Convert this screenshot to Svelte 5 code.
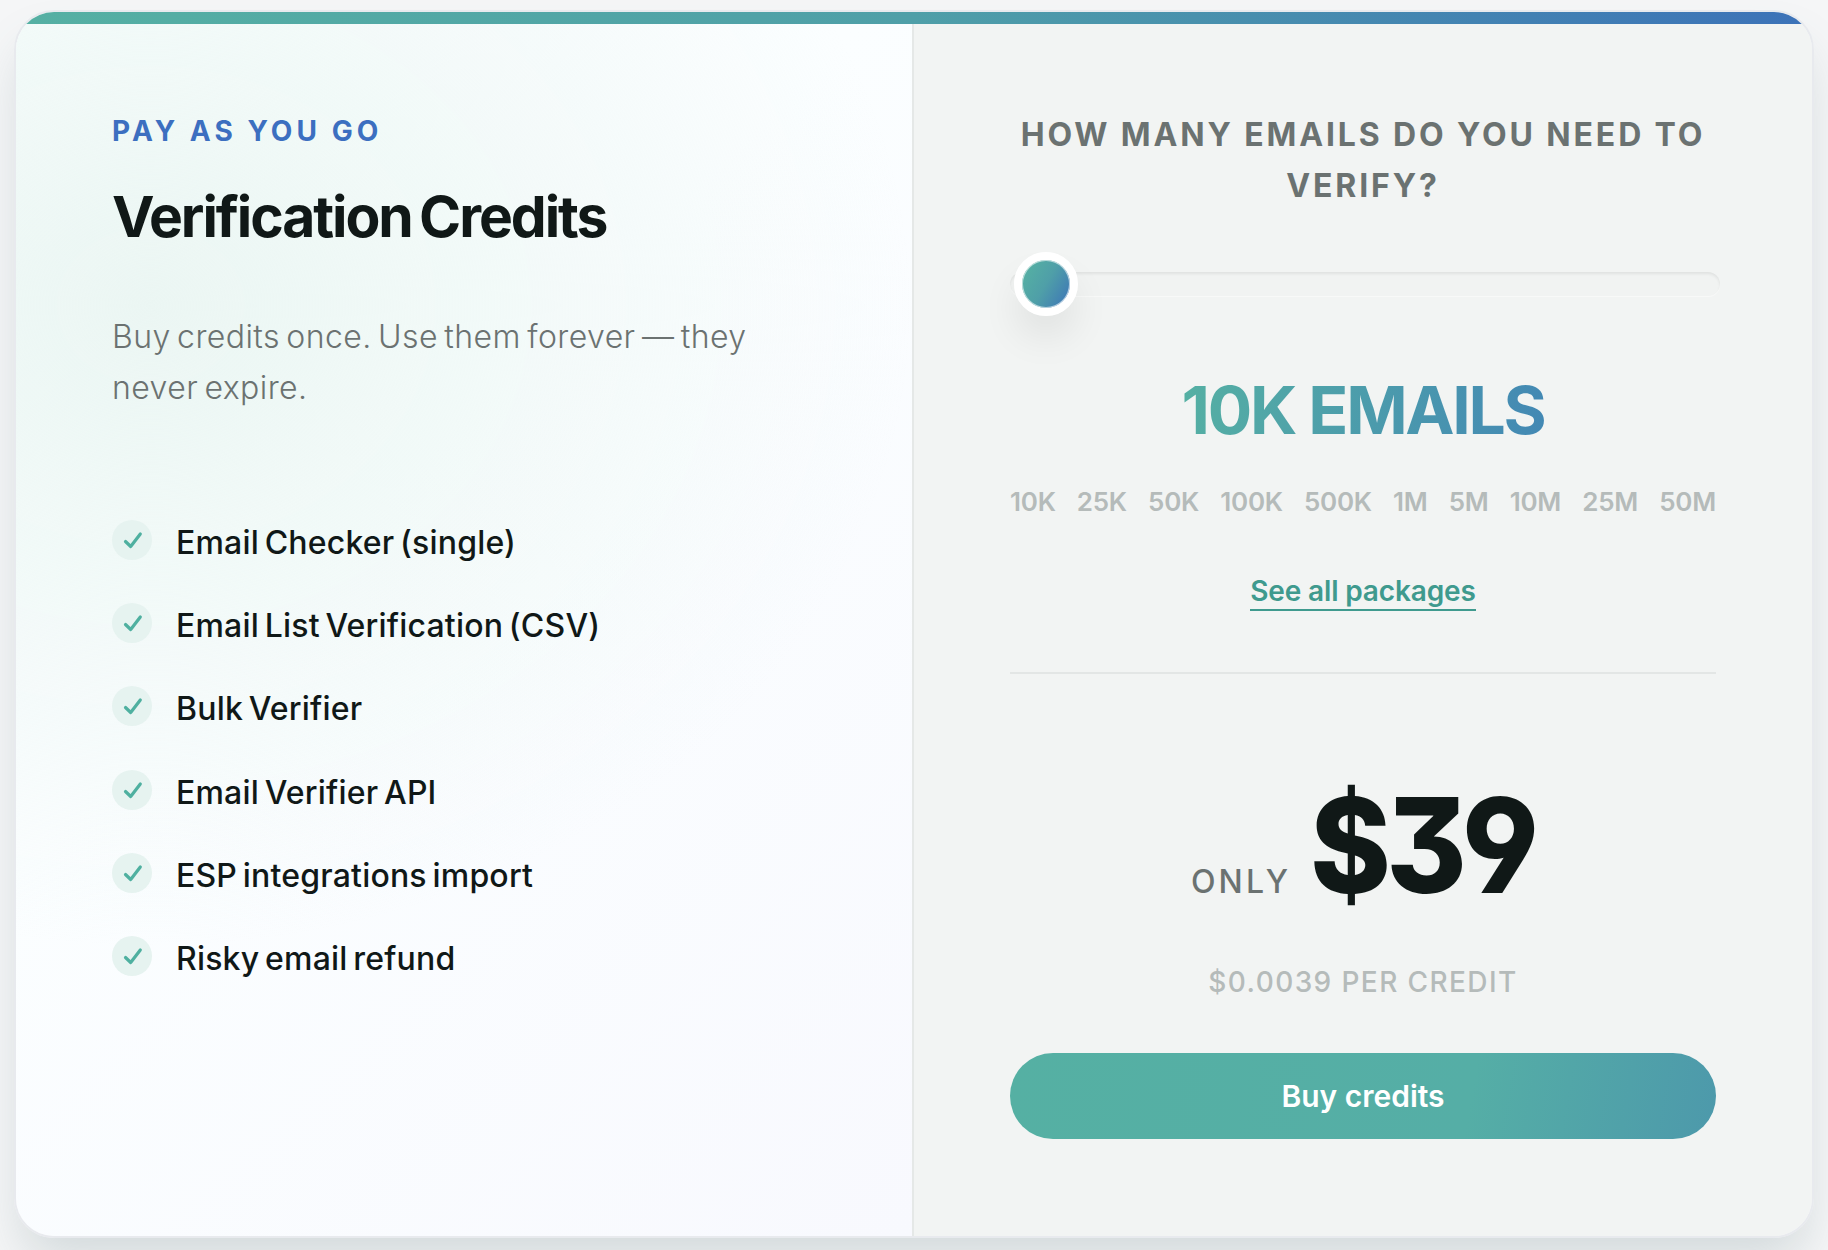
<script>
	const features = [
		'Email Checker (single)',
		'Email List Verification (CSV)',
		'Bulk Verifier',
		'Email Verifier API',
		'ESP integrations import',
		'Risky email refund'
	];
	const ticks = ['10K', '25K', '50K', '100K', '500K', '1M', '5M', '10M', '25M', '50M'];
</script>

<div class="page">
	<div class="card">
		<div class="bar"></div>
		<section class="left">
			<p class="eyebrow">PAY AS YOU GO</p>
			<h1>Verification Credits</h1>
			<p class="lead">Buy credits once. Use them forever — they never expire.</p>
			<ul>
				{#each features as f}
					<li>
						<span class="check">
							<svg viewBox="0 0 24 24" width="24" height="24" fill="none" stroke="#4fb0a0" stroke-width="3.2" stroke-linecap="round" stroke-linejoin="round">
								<path d="M5.5 13.5l5.2 5L20.3 6" />
							</svg>
						</span>
						<span>{f}</span>
					</li>
				{/each}
			</ul>
		</section>
		<section class="right">
			<h2>HOW MANY EMAILS DO YOU NEED TO VERIFY?</h2>
			<div class="slider">
				<div class="track"></div>
				<div class="thumb"></div>
			</div>
			<div class="value"><span>10K EMAILS</span></div>
			<div class="ticks">
				{#each ticks as t}
					<span>{t}</span>
				{/each}
			</div>
			<div class="link-row"><a href="#packages">See all packages</a></div>
			<hr />
			<div class="price">
				<span class="only">ONLY</span>
				<span class="amount">$39</span>
			</div>
			<p class="per">$0.0039 PER CREDIT</p>
			<button>Buy credits</button>
		</section>
	</div>
</div>

<style>
	:global(body) {
		margin: 0;
		background: #f5f6f7;
		font-family: Inter, "Noto Sans", sans-serif;
	}
	.page {
		height: 1250px;
		box-sizing: border-box;
		padding: 10px 14px 0;
		overflow: hidden;
	}
	.card {
		position: relative;
		display: grid;
		grid-template-columns: 1fr 1fr;
		border: 2px solid #e8eaee;
		border-radius: 40px;
		overflow: hidden;
		box-shadow: 0 30px 50px -8px rgba(90, 120, 125, 0.22);
	}
	.bar {
		position: absolute;
		top: 0;
		left: 0;
		right: 0;
		height: 12px;
		background: linear-gradient(90deg, #55b0a3 0%, #4f9fa8 50%, #3c72b8 100%);
	}
	.left {
		padding: 97px 96px;
		background:
			radial-gradient(ellipse 760px 640px at 15% 24%, #ebf6f3 0%, rgba(235, 246, 243, 0) 100%),
			linear-gradient(135deg, #fbfeff 40%, #f8f9fe 100%);
	}
	.eyebrow {
		margin: 0;
		font-size: 28px;
		line-height: 45px;
		font-weight: 700;
		letter-spacing: 0.145em;
		color: #3c6fc0;
	}
	h1 {
		margin: 25px 0 0;
		font-size: 57px;
		line-height: 76px;
		font-weight: 700;
		letter-spacing: -0.0365em;
		word-spacing: -4px;
		color: #101817;
	}
	.lead {
		margin: 56px 0 0;
		font-size: 32px;
		line-height: 51px;
		font-weight: 350;
		letter-spacing: 0.013em;
		word-spacing: -3px;
		color: #6b7271;
	}
	ul {
		margin: 104px 0 0;
		padding: 0;
		list-style: none;
		display: flex;
		flex-direction: column;
		gap: 32px;
	}
	li {
		display: flex;
		gap: 24px;
		font-size: 32px;
		line-height: 51.2px;
		font-weight: 500;
		letter-spacing: 0.006em;
		word-spacing: -3px;
		color: #101817;
	}
	.check {
		flex: none;
		width: 40px;
		height: 40px;
		margin-top: 3px;
		border-radius: 50%;
		background: #e6f3f0;
		display: flex;
		align-items: center;
		justify-content: center;
	}
	.right {
		padding: 97px 96px;
		background: #f2f4f3;
		border-left: 2px solid #e5e8e7;
		margin-left: -2px;
		min-width: 0;
	}
	h2 {
		margin: 0;
		text-align: center;
		font-size: 32px;
		line-height: 51.2px;
		font-weight: 700;
		letter-spacing: 0.09em;
		color: #6b7271;
	}
	.slider {
		position: relative;
		margin: 41px -4px 0 0;
		height: 64px;
		display: flex;
		align-items: center;
	}
	.track {
		flex: 1;
		height: 24px;
		border-radius: 12px;
		background: #f1f3f2;
		box-shadow: inset 0 2px 3px rgba(0, 0, 0, 0.07), 0 1px 1px rgba(255, 255, 255, 0.5);
	}
	.thumb {
		position: absolute;
		left: 4px;
		top: 0;
		box-sizing: border-box;
		width: 64px;
		height: 64px;
		border-radius: 50%;
		border: 8px solid #fff;
		background: linear-gradient(120deg, #55b0a3 10%, #4f9fa8 50%, #3c72b8 100%);
		box-shadow: 0 24px 40px -4px rgba(0, 0, 0, 0.09), inset 0 0 0 1px rgba(255, 255, 255, 0.6);
	}
	.value {
		margin-top: 56px;
		text-align: center;
		font-size: 66px;
		line-height: 77px;
		font-weight: 700;
		letter-spacing: -0.035em;
	}
	.value span {
		display: inline-block;
		background: linear-gradient(100deg, #55b0a3 0%, #4388b4 100%);
		-webkit-background-clip: text;
		background-clip: text;
		color: transparent;
	}
	.ticks {
		margin-top: 30px;
		display: flex;
		justify-content: space-between;
		font-size: 26px;
		line-height: 45px;
		font-weight: 600;
		letter-spacing: -0.01em;
		color: #b5bbba;
	}
	.link-row {
		margin-top: 49px;
		text-align: center;
	}
	a {
		display: inline-block;
		font-size: 28px;
		line-height: 36px;
		font-weight: 600;
		letter-spacing: -0.005em;
		color: #3f9a8e;
		text-decoration: none;
		border-bottom: 2px solid #3f9a8e;
	}
	hr {
		margin: 61px 0 0;
		border: none;
		height: 2px;
		background: #e3e6e5;
	}
	.price {
		margin-top: 109px;
		display: flex;
		justify-content: center;
		align-items: baseline;
		gap: 19px;
		height: 124px;
	}
	.only {
		font-size: 32px;
		font-weight: 500;
		letter-spacing: 0.1em;
		color: #6b7271;
	}
	.amount {
		display: inline-block;
		font-size: 132px;
		line-height: 124px;
		font-weight: 800;
		letter-spacing: -0.04em;
		font-feature-settings: 'cv09', 'cv04';
		color: #101817;
		transform: scaleX(0.93);
		transform-origin: left center;
		margin-right: -16px;
	}
	.per {
		margin: 53px 0 0;
		text-align: center;
		font-size: 28px;
		line-height: 45px;
		font-weight: 500;
		letter-spacing: 0.05em;
		color: #b5bbba;
	}
	button {
		display: block;
		width: 100%;
		margin-top: 48px;
		height: 86px;
		padding-top: 1px;
		border: none;
		border-radius: 43px;
		background: linear-gradient(100deg, #55b0a3 0%, #55aea6 65%, #4d99ab 100%);
		color: #fff;
		font: 600 30px Inter, sans-serif;
	}
</style>
